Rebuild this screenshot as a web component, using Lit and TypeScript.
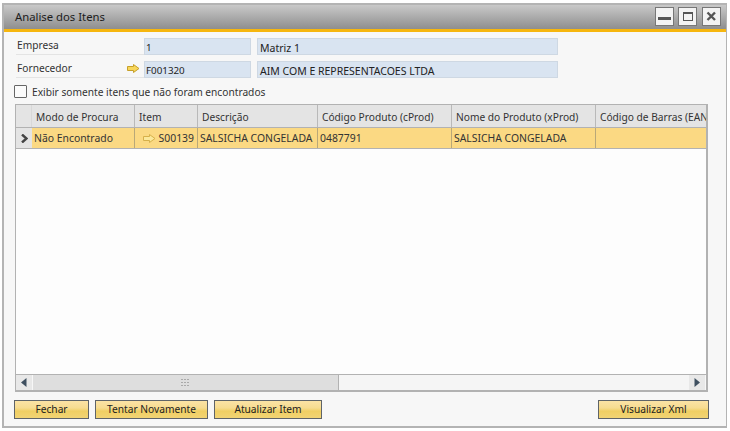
import { LitElement, html, css, svg } from "lit";
import { customElement } from "lit/decorators.js";

const arrow = (fill: string, stroke: string) => html`<svg class="arrow" width="13" height="9" viewBox="0 0 13 9"><path d="M0.5 2.5H6.5V0.5L12 4.5L6.5 8.5V6.5H0.5Z" fill="${fill}" stroke="${stroke}" stroke-width="1"/></svg>`;

@customElement("app-root")
export class AppRoot extends LitElement {
  static styles = css`
    :host { display: block; width: 730px; height: 431px; background: #fff; font-family: "Noto Sans", sans-serif; font-size: 10.2px; color: #222; overflow: hidden; }
    * { box-sizing: border-box; }
    .window { margin: 3px 0 0 2px; width: 725px; height: 425px; border: 2px solid #b4b4b4; border-right-width: 1px; display: flex; flex-direction: column;
      background-color: #f7f7f7;
      background-image: radial-gradient(#e4e4e4 0.6px, transparent 0.7px);
      background-size: 2px 2px; }
    .title { flex: none; display: flex; align-items: center; justify-content: space-between; padding: 0 5px 0 11px;
      background: linear-gradient(#c9c9c9, #8e8e8e); font-size: 11.3px; color: #1c1c1c; border-bottom: 3px solid #f6b60e; height: 27px; }
    .title-text { margin-top: -2px; }
    .winbtns { display: flex; gap: 4px; margin-top: -1px; }
    .winbtn { width: 19px; height: 19px; background: #f3f3f3; border: 1px solid #777; display: flex; align-items: center; justify-content: center; }
    .winbtn + .winbtn + .winbtn { margin-left: 1px; }
    .content { flex: 1; display: flex; flex-direction: column; padding: 6px 0 0 10px; min-height: 0; }
    .field-row { display: flex; height: 17px; margin-bottom: 6px; margin-left: 2px; }
    .label { width: 128px; padding: 0 0 0 1px; border-bottom: 1px solid #e4e4e4; display: flex; justify-content: space-between; align-items: flex-start; color: #333; line-height: 14px; }
    .label .arrow { margin: 3px 4px 0 0; }
    .input { background: #d9e4f1; border: 1px solid #ced8e3; font-size: 10.5px; line-height: 14px; padding: 2px 0 0 1px; color: #222; height: 17px; }
    .input.a { width: 107px; font-size: 9.8px; }
    .input.b { width: 301px; margin-left: 6px; padding-left: 2px; }
    .check { display: flex; align-items: center; height: 13px; margin-top: 1px; gap: 5px; color: #333; }
    .box { width: 13px; height: 13px; background: #fbfbfb; border: 1px solid #666; border-radius: 1px; }
    .grid { margin: 6px 0 0 1px; width: 693px; height: 288px; border: 2px solid #b2b2b2; border-top-width: 1px; border-left-width: 1px; background: #fdfdfd; display: flex; flex-direction: column; }
    .rows { flex: 1; min-height: 0; overflow: hidden; }
    .hrow, .drow { display: grid; grid-template-columns: 16px 103px 63px 120px 134px 144px 112px; white-space: nowrap; }
    .hrow { height: 23px; background: #e4e4e4; border-bottom: 1px solid #b2b2b2; }
    .hrow > div { border-right: 1px solid #b9b9b9; padding: 5px 0 0 4px; overflow: hidden; line-height: 15px; color: #333; }
    .drow { height: 21px; background: #fbd983; border-bottom: 1px solid #b2b2b2; }
    .drow > div { border-right: 1px solid #b9a878; padding: 3px 0 0 2px; overflow: hidden; line-height: 15px; color: #333; font-size: 10.4px; }
    .hrow > div:last-child, .drow > div:last-child { border-right: none; }
    .drow > .corner { background: #e4e4e4; padding: 0; border-right: none; display: flex; align-items: center; justify-content: center; }
    .hrow > .corner { padding: 0; border-right: 1px solid #d8d8d8; }
    .itemcell { display: flex; justify-content: space-between; align-items: flex-start; }
    .itemcell .arrow { margin: 3px 0 0 6px; }
    .itemcell span { padding-right: 3px; }
    .scroll { height: 16px; flex: none; display: flex; align-items: stretch; background: #e4e4e4; border-top: 1px solid #b2b2b2; }
    .sbtn { width: 17px; display: flex; align-items: center; justify-content: center; background: #e8e8e8; border-right: 1px solid #f7f7f7; }
    .thumb { width: 306px; background: #dedede; border-right: 1px solid #b2b2b2; display: flex; align-items: center; justify-content: center; }
    .track { flex: 1; background: #f5f5f5; }
    .actions { display: flex; gap: 6px; margin: 8px 0 0 0; width: 695px; }
    .btn { height: 19px; border: 1px solid #5f6468; background: linear-gradient(#fbe3a5, #f7dc91 40%, #f0cf63 60%, #f2d474); text-align: center; line-height: 17px; color: #222; }
    .btn.w1 { width: 75px; }
    .btn.w2 { width: 113px; }
    .btn.w3 { width: 108px; }
    .btn.w4 { width: 111px; }
    .spacer { flex: 1; }
  `;

  render() {
    const cols = ["Modo de Procura", "Item", "Descrição", "Código Produto (cProd)", "Nome do Produto (xProd)", "Código de Barras (EAN)"];
    return html`
      <div class="window">
        <div class="title">
          <span class="title-text">Analise dos Itens</span>
          <div class="winbtns">
            <div class="winbtn"><svg width="13" height="13" viewBox="0 0 13 13"><rect x="0" y="7" width="13" height="3" fill="#555"/></svg></div>
            <div class="winbtn"><svg width="13" height="13" viewBox="0 0 13 13"><rect x="2.5" y="2.5" width="9" height="8" fill="none" stroke="#555"/><rect x="2" y="2" width="10" height="2" fill="#555"/></svg></div>
            <div class="winbtn"><svg width="13" height="13" viewBox="0 0 13 13"><path d="M2.5 2.5L10 10M10 2.5L2.5 10" stroke="#555" stroke-width="2.4" fill="none"/></svg></div>
          </div>
        </div>
        <div class="content">
          <div class="field-row">
            <div class="label"><span>Empresa</span></div>
            <div class="input a">1</div>
            <div class="input b">Matriz 1</div>
          </div>
          <div class="field-row">
            <div class="label"><span>Fornecedor</span>${arrow("#f8d65a", "#c6a02a")}</div>
            <div class="input a">F001320</div>
            <div class="input b">AIM COM E REPRESENTACOES LTDA</div>
          </div>
          <div class="check"><div class="box"></div><span>Exibir somente itens que não foram encontrados</span></div>
          <div class="grid">
            <div class="rows">
              <div class="hrow"><div class="corner"></div>${cols.map((c) => html`<div>${c}</div>`)}</div>
              <div class="drow">
                <div class="corner"><svg width="7" height="9" viewBox="0 0 7 9"><path d="M1 0.5L5.5 4.5L1 8.5" fill="none" stroke="#444" stroke-width="2.4"/></svg></div>
                <div>Não Encontrado</div>
                <div class="itemcell">${arrow("#fbe89b", "#d6b04a")}<span>S00139</span></div>
                <div>SALSICHA CONGELADA</div>
                <div>0487791</div>
                <div>SALSICHA CONGELADA</div>
                <div></div>
              </div>
            </div>
            <div class="scroll">
              <div class="sbtn"><svg width="6" height="9" viewBox="0 0 6 9"><path d="M5.5 0V9L0 4.5Z" fill="#3f5060"/></svg></div>
              <div class="thumb"><svg width="9" height="7" viewBox="0 0 9 7"><g fill="#aaa">${[0, 3, 6].map((x) => [0, 3, 6].map((y) => svg`<rect x="${x}" y="${y}" width="2" height="1"/>`))}</g></svg></div>
              <div class="track"></div>
              <div class="sbtn"><svg width="6" height="9" viewBox="0 0 6 9"><path d="M0.5 0V9L6 4.5Z" fill="#3f5060"/></svg></div>
            </div>
          </div>
          <div class="actions">
            <div class="btn w1">Fechar</div>
            <div class="btn w2">Tentar Novamente</div>
            <div class="btn w3">Atualizar Item</div>
            <div class="spacer"></div>
            <div class="btn w4">Visualizar Xml</div>
          </div>
        </div>
      </div>
    `;
  }
}
